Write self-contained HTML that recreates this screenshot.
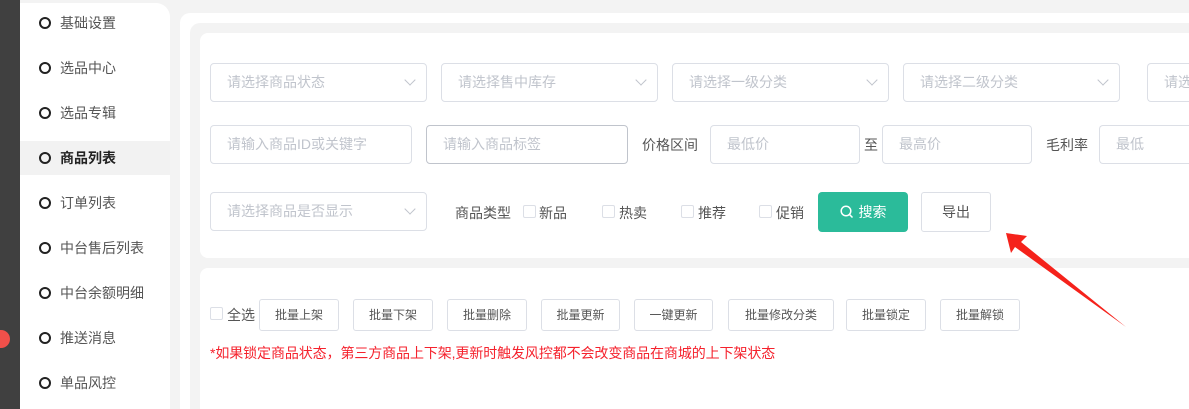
<!DOCTYPE html>
<html><head><meta charset="utf-8"><style>
*{margin:0;padding:0;box-sizing:border-box}
html,body{width:1189px;height:409px;overflow:hidden}
body{background:#f3f3f3;font-family:"Liberation Sans","Noto Sans CJK SC",sans-serif;position:relative}
.a{position:absolute}
.dark{left:0;top:0;width:20px;height:409px;background:#404040}
.side{left:20px;top:3px;width:150px;height:406px;background:#fff;border-top-right-radius:14px}
.it{position:absolute;left:20px;width:150px;height:34px;font-size:14px;color:#555;line-height:34px}
.it i{position:absolute;left:19px;top:11px;width:12px;height:12px;border:2.5px solid #222;border-radius:50%}
.it span{position:absolute;left:40px}
.act{background:#f2f2f2;color:#222;font-weight:bold}
.box{border:1px solid #dcdfe6;border-radius:4px;background:#fff;height:39px;font-size:14px;color:#c0c4cc;line-height:37px;padding-left:16px;white-space:nowrap;overflow:hidden}
.sel::after{content:"";position:absolute;right:12px;top:12px;width:7px;height:7px;border-right:1px solid #c0c4cc;border-bottom:1px solid #c0c4cc;transform:rotate(45deg)}
.lbl{font-size:14px;color:#555}
.cb{width:13px;height:13px;border:1px solid #dcdfe6;border-radius:2px;background:#fff}
.btn{border:1px solid #dcdfe6;border-radius:3px;background:#fff;height:32px;font-size:12px;color:#555;text-align:center;line-height:30px}
</style></head><body>
<div class="a dark"></div>
<div class="a" style="left:-8px;top:330px;width:18px;height:18px;border-radius:50%;background:#f0504a"></div>
<div class="a side"></div>
<div class="it" style="top:6px"><i></i><span>基础设置</span></div>
<div class="it" style="top:51px"><i></i><span>选品中心</span></div>
<div class="it" style="top:96px"><i></i><span>选品专辑</span></div>
<div class="it act" style="top:141px"><i></i><span>商品列表</span></div>
<div class="it" style="top:186px"><i></i><span>订单列表</span></div>
<div class="it" style="top:231px"><i></i><span>中台售后列表</span></div>
<div class="it" style="top:276px"><i></i><span>中台余额明细</span></div>
<div class="it" style="top:321px"><i></i><span>推送消息</span></div>
<div class="it" style="top:366px"><i></i><span>单品风控</span></div>

<div class="a" style="left:180px;top:13px;width:1009px;height:396px;background:#fff;border-top-left-radius:10px"></div>
<div class="a" style="left:190px;top:23px;width:999px;height:386px;background:#f3f3f3;border-top-left-radius:10px"></div>
<div class="a" style="left:200px;top:33px;width:989px;height:225px;background:#fff;border-top-left-radius:8px;border-bottom-left-radius:8px"></div>
<div class="a" style="left:200px;top:268px;width:989px;height:141px;background:#fff;border-top-left-radius:8px"></div>

<div class="a box sel" style="left:210px;top:63px;width:217px">请选择商品状态</div>
<div class="a box sel" style="left:441px;top:63px;width:217px">请选择售中库存</div>
<div class="a box sel" style="left:672px;top:63px;width:217px">请选择一级分类</div>
<div class="a box sel" style="left:903px;top:63px;width:217px">请选择二级分类</div>
<div class="a box" style="left:1147px;top:63px;width:42px;border-right:none;border-radius:4px 0 0 4px">请选</div>

<div class="a box" style="left:210px;top:125px;width:202px">请输入商品ID或关键字</div>
<div class="a box" style="left:426px;top:125px;width:202px;border-color:#c0c4cc">请输入商品标签</div>
<div class="a lbl" style="left:642px;top:135px">价格区间</div>
<div class="a box" style="left:710px;top:125px;width:150px">最低价</div>
<div class="a lbl" style="left:864px;top:135px">至</div>
<div class="a box" style="left:882px;top:125px;width:150px">最高价</div>
<div class="a lbl" style="left:1046px;top:135px">毛利率</div>
<div class="a box" style="left:1099px;top:125px;width:90px;border-right:none;border-radius:4px 0 0 4px">最低</div>

<div class="a box sel" style="left:210px;top:192px;width:217px">请选择商品是否显示</div>
<div class="a lbl" style="left:455px;top:203px">商品类型</div>
<div class="a cb" style="left:523px;top:205px"></div><div class="a lbl" style="left:539px;top:203px">新品</div>
<div class="a cb" style="left:602px;top:205px"></div><div class="a lbl" style="left:619px;top:203px">热卖</div>
<div class="a cb" style="left:681px;top:205px"></div><div class="a lbl" style="left:698px;top:203px">推荐</div>
<div class="a cb" style="left:759px;top:205px"></div><div class="a lbl" style="left:776px;top:203px">促销</div>
<div class="a" style="left:818px;top:192px;width:90px;height:40px;background:#2bbb9a;border-radius:4px;color:#fff;font-size:14px;line-height:40px;text-align:center"><svg width="14" height="14" viewBox="0 0 14 14" style="vertical-align:-2px;margin-right:5px"><circle cx="6" cy="6" r="4.8" fill="none" stroke="#fff" stroke-width="1.5"/><path d="M9.5 9.5 L12.5 12.5" stroke="#fff" stroke-width="1.5"/></svg>搜索</div>
<div class="a btn" style="left:921px;top:192px;width:70px;height:40px;line-height:38px;font-size:14px">导出</div>

<div class="a cb" style="left:210px;top:307px"></div><div class="a lbl" style="left:227px;top:305px">全选</div>
<div class="a btn" style="left:259px;top:299px;width:80px">批量上架</div>
<div class="a btn" style="left:353px;top:299px;width:80px">批量下架</div>
<div class="a btn" style="left:447px;top:299px;width:80px">批量删除</div>
<div class="a btn" style="left:541px;top:299px;width:79px">批量更新</div>
<div class="a btn" style="left:634px;top:299px;width:79px">一键更新</div>
<div class="a btn" style="left:728px;top:299px;width:106px">批量修改分类</div>
<div class="a btn" style="left:846px;top:299px;width:80px">批量锁定</div>
<div class="a btn" style="left:940px;top:299px;width:80px">批量解锁</div>
<div class="a" style="left:210px;top:343px;font-size:14px;color:#f5222d;letter-spacing:-0.1px;white-space:nowrap">*如果锁定商品状态，第三方商品上下架,更新时触发风控都不会改变商品在商城的上下架状态</div>

<svg class="a" style="left:0;top:0" width="1189" height="409"><path d="M1006 233 L1027 236 L1021 242 L1126 327 L1015 247 L1011 253 Z" fill="#f5221b"/></svg>
</body></html>
